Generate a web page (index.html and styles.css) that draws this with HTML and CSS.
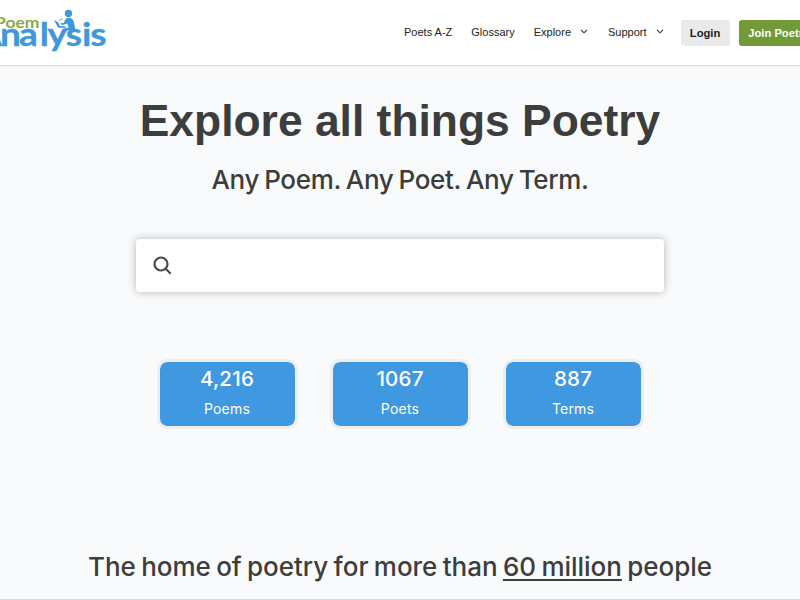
FILE: index.html
```html
<!DOCTYPE html>
<html lang="en">
<head>
    <meta charset="utf-8">
    <title>Poem Analysis</title>
    <link rel="stylesheet" href="styles.css">
</head>
<body>
    <header class="site-header">
        <a class="logo" href="#">
            <svg width="120" height="60" viewBox="0 0 120 60">
                <text class="logo-poem" x="-5" y="27.500" textLength="44.500" lengthAdjust="spacingAndGlyphs">Poem</text>
                <text class="logo-analysis" transform="scale(1.12 1)" y="46.500" x="-12 0 17 35.500 42.500 58.800 73.300 80.500"><tspan class="logo-initial">A</tspan>nalysis</text>
                <!-- Seated reader -->
                <g fill="#3f97dc">
                    <circle cx="68.500" cy="13.500" r="3.700"/>
                    <path d="M66 18.500q5-2 7.500 2l1.500 7q.5 3-3 3h-5l-3 4h-3l3.500-6 4-1-1-4-5 1.500-3-1.500 4-.5z"/>
                    <path d="M54 20l4 2 2 4 6 .5-1 1.500-7-.5z"/>
                </g>
                <path d="M59 21q1-3 4-2" fill="none" stroke="#3f97dc" stroke-width=".8"/>
            </svg>
        </a>
        <nav class="main-nav">
            <a class="nav-link" href="#">Poets A-Z</a>
            <a class="nav-link" href="#">Glossary</a>
            <a class="nav-link dropdown" href="#">Explore
                <svg class="chevron" width="8" height="5" viewBox="0 0 8 5"><path d="M1 .8l3 3 3-3"/></svg>
            </a>
            <a class="nav-link dropdown" href="#">Support
                <svg class="chevron" width="8" height="5" viewBox="0 0 8 5"><path d="M1 .8l3 3 3-3"/></svg>
            </a>
            <a class="button login" href="#">Login</a>
            <a class="button join" href="#">Join Poetry+</a>
        </nav>
    </header>

    <main class="hero">
        <h1>Explore all things Poetry</h1>
        <p class="subtitle">Any Poem. Any Poet. Any Term.</p>

        <div class="search">
            <svg width="20" height="20" viewBox="0 0 20 20">
                <circle cx="8" cy="8" r="6.500"/>
                <path d="M12.700 12.700l5 5"/>
            </svg>
        </div>

        <div class="stats">
            <div class="stat"><span class="number">4,216</span><span class="label">Poems</span></div>
            <div class="stat"><span class="number">1067</span><span class="label">Poets</span></div>
            <div class="stat"><span class="number">887</span><span class="label">Terms</span></div>
        </div>

        <p class="tagline">The home of poetry for more than <u>60 million</u> people</p>
    </main>
</body>
</html>
```

FILE: styles.css
```css
* {
    box-sizing: border-box;
}

body {
    margin: 0;
    height: 600px;
    background-color: #f9fafc;
    color: #3c3d3d;
    font-family: Inter, sans-serif;
    overflow: hidden;
}

a {
    color: inherit;
    text-decoration: none;
}

.site-header {
    height: 66px;
    display: flex;
    background-color: white;
    border-bottom: 1px solid #dcdee2;
    box-shadow: 0 1px 2px rgba(0, 0, 0, 0.05);
    font-family: "Liberation Sans", Arial, sans-serif;
}

.logo {
    width: 404px;
    flex: none;
}

.logo svg {
    display: block;
}

.logo-poem,
.logo-analysis {
    font-family: Lato, sans-serif;
    font-weight: bold;
}

.logo-poem {
    fill: #85ad42;
    font-size: 15.5px;
}

.logo-analysis {
    fill: #3f97dc;
    stroke: #3f97dc;
    stroke-width: 0.3;
    font-size: 33px;
}

.logo-initial {
    font-size: 20px;
}

.main-nav {
    display: flex;
    align-items: center;
    height: 65px;
    flex: none;
}

.nav-link {
    display: flex;
    align-items: center;
    margin: 0 19px 2px 0;
    color: #222;
    font-size: 11px;
    white-space: nowrap;
}

.dropdown {
    margin-right: 20px;
}

.chevron {
    margin-left: 9px;
    fill: none;
    stroke: #333;
    stroke-width: 1.1;
}

.dropdown + .button {
    margin-left: -3px;
}

.button {
    height: 26px;
    line-height: 26px;
    border-radius: 3px;
    font-size: 11.2px;
    font-weight: bold;
    text-align: center;
    white-space: nowrap;
}

.login {
    width: 49px;
    margin-right: 9px;
    background-color: #e9eaec;
    color: #1c1d20;
}

.join {
    width: 87px;
    background-color: #729a38;
    color: white;
}

.hero {
    height: 534px;
    display: flex;
    flex-direction: column;
    align-items: center;
    border-bottom: 1px solid #dcdddf;
}

h1 {
    margin: 30px 0 0;
    font-family: "Liberation Sans", Arial, sans-serif;
    font-size: 44.4px;
    line-height: 50px;
}

.subtitle,
.tagline {
    margin: 17px 0 0;
    font-size: 26px;
    font-weight: 500;
    line-height: 34px;
    letter-spacing: -0.33px;
    word-spacing: -1.5px;
    white-space: nowrap;
}

.search {
    width: 528px;
    height: 53px;
    margin-top: 42px;
    padding: 17px;
    background-color: white;
    border-radius: 4px;
    box-shadow: 0 0 8px rgba(0, 0, 0, 0.28);
}

.search svg {
    fill: none;
    stroke: #4a4a4a;
    stroke-width: 2.2;
}

.stats {
    display: flex;
    gap: 32px;
    margin-top: 67px;
}

.stat {
    width: 141px;
    height: 70px;
    display: flex;
    flex-direction: column;
    align-items: center;
    border: 3px solid #eeeeee;
    border-radius: 10px;
    background-color: #4098e0;
    background-clip: padding-box;
    color: white;
}

.number {
    margin-top: 4px;
    font-size: 20.5px;
    font-weight: 500;
    line-height: 26px;
    letter-spacing: 0.2px;
}

.label {
    margin-top: 7px;
    font-size: 14px;
    line-height: 20px;
    letter-spacing: 0.2px;
}

.tagline {
    margin-top: 121px;
    letter-spacing: -0.03px;
}

.tagline u {
    text-decoration-thickness: 2px;
    text-underline-offset: 3px;
}
```
